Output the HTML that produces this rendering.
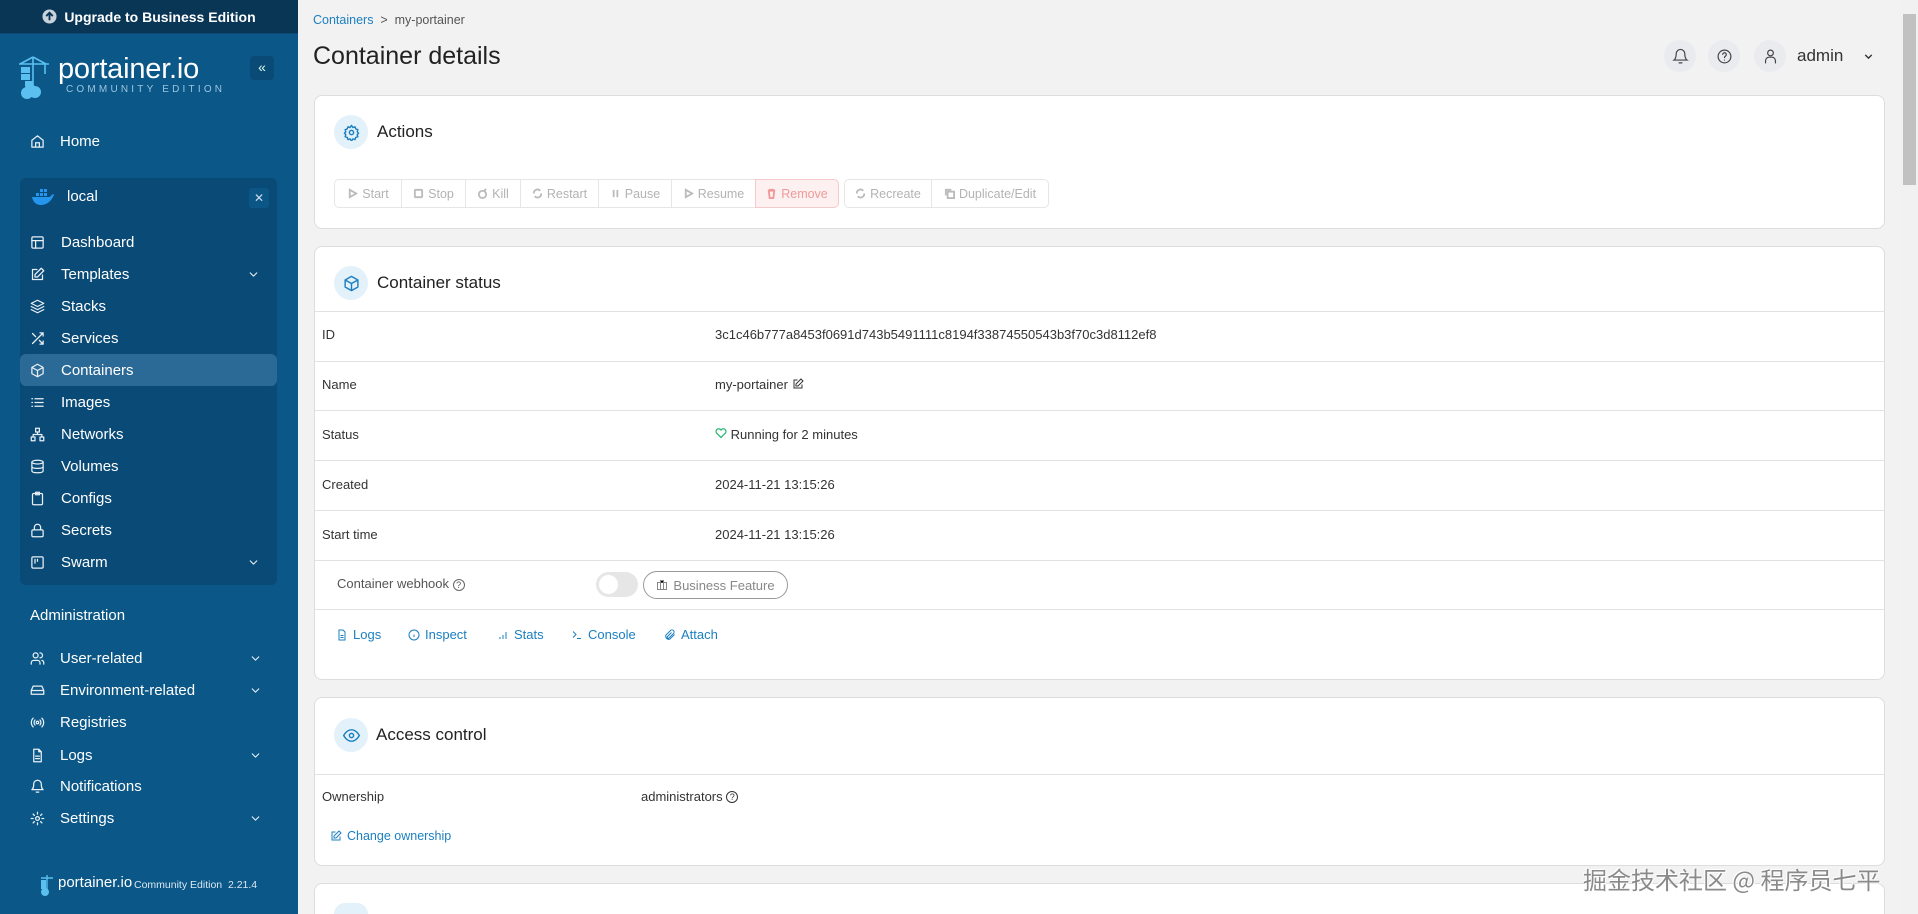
<!DOCTYPE html>
<html style="overflow:hidden;height:914px"><head><meta charset="utf-8"><style>
*{box-sizing:border-box;margin:0;padding:0}
body{width:1918px;height:914px;overflow:hidden;background:#f2f2f2;font-family:"Liberation Sans","Noto Sans CJK SC",sans-serif;position:relative;color:#222}
.abs{position:absolute}
#sb{position:absolute;left:0;top:0;width:298px;height:914px;background:#0b5787}
#up{position:absolute;left:0;top:0;width:298px;height:34px;background:#0a3656;color:#fff;font-size:14px;font-weight:bold;display:flex;align-items:center;justify-content:center;gap:7px;border-bottom:1px solid #0d4b75}
.nav{position:absolute;left:0;width:298px;height:20px;color:#fff;font-size:15px;font-weight:500;display:flex;align-items:center}
.nav svg{position:absolute;left:30px;width:15px;height:15px;fill:none;stroke:#e8f0f6;stroke-width:2;stroke-linecap:round;stroke-linejoin:round}
.nav span{position:absolute;left:60px}
.nav .chev{position:absolute;left:249px;width:13px;height:13px}
#env{position:absolute;left:20px;top:178px;width:257px;height:407px;background:#0a4a76;border-radius:6px}
.card{position:absolute;left:314px;width:1571px;background:#fff;border:1px solid #ddd;border-radius:8px}
.ic{position:absolute;width:34px;height:34px;border-radius:50%;background:#e3f1fb;display:flex;align-items:center;justify-content:center}
.ic svg{width:17px;height:17px;fill:none;stroke:#1b7fbf;stroke-width:2;stroke-linecap:round;stroke-linejoin:round}
.ct{position:absolute;font-size:17px;color:#222}
.hl{position:absolute;left:0;width:100%;height:1px;background:#e2e2e2}
.row{position:absolute;font-size:13px;color:#333}
.btn{position:absolute;top:179px;height:29px;border:1px solid #e6e6e6;font-size:12.5px;color:#b3b3b3;display:flex;align-items:center;justify-content:center;gap:4px;background:#fff}
.btn svg{width:11px;height:11px;fill:none;stroke:#bbb;stroke-width:2}
.lnk{position:absolute;top:627px;font-size:13px;color:#1b7fbf;display:flex;gap:5px;align-items:center}
.lnk svg{width:12px;height:12px;fill:none;stroke:#1b7fbf;stroke-width:2}
.hb{position:absolute;top:40px;width:32px;height:32px;border-radius:50%;background:#e9ebee;display:flex;align-items:center;justify-content:center}
.hb svg{width:17px;height:17px;fill:none;stroke:#444;stroke-width:1.7;stroke-linecap:round}
</style></head><body>
<div id="sb">
<div id="up"><svg width="15" height="15" viewBox="0 0 16 16"><circle cx="8" cy="8" r="7.5" fill="#c9d3dc"/><path d="M8 12V4M4.5 7.5 8 4l3.5 3.5" stroke="#0a3656" stroke-width="2" fill="none"/></svg>Upgrade to Business Edition</div>
<svg class="abs" style="left:17px;top:55px" width="34" height="46" viewBox="0 0 34 46"><g stroke="#5bc0f0" stroke-width="1.6" fill="none"><path d="M16 2v28M2 9h30M16 2 3 9M16 2l13 7M28 9v10"/></g><rect x="4" y="12" width="9" height="6" fill="#5bc0f0"/><rect x="4" y="19" width="9" height="6" fill="#5bc0f0"/><rect x="8" y="26" width="8" height="5" fill="#5bc0f0"/><circle cx="10" cy="38" r="6" fill="#5bc0f0"/><circle cx="18" cy="37" r="6" fill="#5bc0f0"/><circle cx="13" cy="33" r="5" fill="#5bc0f0"/></svg>
<div class="abs" style="left:58px;top:53px;color:#fff;font-size:29px;letter-spacing:-.2px">portainer.io</div>
<div class="abs" style="left:66px;top:84px;color:#9cc5e0;font-size:10px;letter-spacing:3.2px">COMMUNITY EDITION</div>
<div class="abs" style="left:250px;top:56px;width:24px;height:24px;background:#0a4a76;border-radius:4px;color:#dfe;font-size:14px;text-align:center;line-height:22px">«</div>
<div class="nav" style="top:131px"><svg viewBox="0 0 24 24"><path d="M3 10 12 3l9 7v11H3zM9 21v-7h6v7"/></svg><span>Home</span></div>
<div id="env"></div>
<svg class="abs" style="left:31px;top:188px" width="24" height="18" viewBox="0 0 24 18"><path d="M1 9h18c1-2 3-3 4-3-1 5-6 11-13 11C5 17 2 14 1 9z" fill="#2496ed"/><g fill="#2496ed"><rect x="5" y="5" width="3" height="3"/><rect x="9" y="5" width="3" height="3"/><rect x="13" y="5" width="3" height="3"/><rect x="9" y="1" width="3" height="3"/><rect x="13" y="1" width="3" height="3"/></g></svg>
<div class="abs" style="left:67px;top:188px;color:#fff;font-size:15px">local</div>
<div class="abs" style="left:249px;top:188px;width:20px;height:20px;background:#0c5686;border-radius:3px;color:#cde;font-size:12px;text-align:center;line-height:20px">✕</div>
<div class="abs" style="left:20px;top:354px;width:257px;height:32px;background:#2b6a96;border-radius:6px"></div>
<div class="nav" style="top:232px"><svg viewBox="0 0 24 24"><rect x="3" y="3" width="18" height="18" rx="2"/><path d="M3 9h18M9 9v12"/></svg><span style="left:61px">Dashboard</span></div>
<div class="nav" style="top:264px"><svg viewBox="0 0 24 24"><path d="M11 4H4v16h16v-7"/><path d="M18 2l4 4-10 10H8v-4z"/></svg><span style="left:61px">Templates</span><svg class="chev" viewBox="0 0 24 24" style="left:247px"><path d="M6 9l6 6 6-6"/></svg></div>
<div class="nav" style="top:296px"><svg viewBox="0 0 24 24"><path d="M12 2 2 7l10 5 10-5zM2 12l10 5 10-5M2 17l10 5 10-5"/></svg><span style="left:61px">Stacks</span></div>
<div class="nav" style="top:328px"><svg viewBox="0 0 24 24"><path d="M16 3h5v5M4 20 21 3M21 16v5h-5M15 15l6 6M4 4l5 5"/></svg><span style="left:61px">Services</span></div>
<div class="nav" style="top:360px"><svg viewBox="0 0 24 24"><path d="M12 2 3 7v10l9 5 9-5V7zM3 7l9 5 9-5M12 12v10"/></svg><span style="left:61px">Containers</span></div>
<div class="nav" style="top:392px"><svg viewBox="0 0 24 24"><path d="M8 6h13M8 12h13M8 18h13M3 6h1M3 12h1M3 18h1"/></svg><span style="left:61px">Images</span></div>
<div class="nav" style="top:424px"><svg viewBox="0 0 24 24"><rect x="9" y="2" width="6" height="6"/><rect x="2" y="16" width="6" height="6"/><rect x="16" y="16" width="6" height="6"/><path d="M5 16v-4h14v4M12 8v4"/></svg><span style="left:61px">Networks</span></div>
<div class="nav" style="top:456px"><svg viewBox="0 0 24 24"><ellipse cx="12" cy="5" rx="9" ry="3"/><path d="M3 5v14c0 2 4 3 9 3s9-1 9-3V5M3 12c0 2 4 3 9 3s9-1 9-3"/></svg><span style="left:61px">Volumes</span></div>
<div class="nav" style="top:488px"><svg viewBox="0 0 24 24"><rect x="4" y="4" width="16" height="18" rx="2"/><path d="M9 2h6v4H9z"/></svg><span style="left:61px">Configs</span></div>
<div class="nav" style="top:520px"><svg viewBox="0 0 24 24"><rect x="3" y="11" width="18" height="11" rx="2"/><path d="M7 11V7a5 5 0 0 1 10 0v4"/></svg><span style="left:61px">Secrets</span></div>
<div class="nav" style="top:552px"><svg viewBox="0 0 24 24"><rect x="3" y="3" width="18" height="18" rx="2"/><path d="M8 7v6M12 7v3"/></svg><span style="left:61px">Swarm</span><svg class="chev" viewBox="0 0 24 24" style="left:247px"><path d="M6 9l6 6 6-6"/></svg></div>
<div class="abs" style="left:30px;top:607px;color:#fff;font-size:15px;font-weight:500">Administration</div>
<div class="nav" style="top:648px"><svg viewBox="0 0 24 24"><circle cx="9" cy="7" r="4"/><path d="M2 21v-2a4 4 0 0 1 4-4h6a4 4 0 0 1 4 4v2M16 3a4 4 0 0 1 0 8M22 21v-2a4 4 0 0 0-3-4"/></svg><span>User-related</span><svg class="chev" viewBox="0 0 24 24"><path d="M6 9l6 6 6-6"/></svg></div>
<div class="nav" style="top:680px"><svg viewBox="0 0 24 24"><path d="M22 12H2M5 5h14l3 7v6H2v-6z"/></svg><span>Environment-related</span><svg class="chev" viewBox="0 0 24 24"><path d="M6 9l6 6 6-6"/></svg></div>
<div class="nav" style="top:712px"><svg viewBox="0 0 24 24"><circle cx="12" cy="12" r="2"/><path d="M16 8a6 6 0 0 1 0 8M8 16a6 6 0 0 1 0-8M19 5a10 10 0 0 1 0 14M5 19A10 10 0 0 1 5 5"/></svg><span>Registries</span></div>
<div class="nav" style="top:745px"><svg viewBox="0 0 24 24"><path d="M14 2H6v20h12V6zM14 2v4h4M9 13h6M9 17h6"/></svg><span>Logs</span><svg class="chev" viewBox="0 0 24 24"><path d="M6 9l6 6 6-6"/></svg></div>
<div class="nav" style="top:776px"><svg viewBox="0 0 24 24"><path d="M18 8A6 6 0 0 0 6 8c0 7-3 9-3 9h18s-3-2-3-9M10 21h4"/></svg><span>Notifications</span></div>
<div class="nav" style="top:808px"><svg viewBox="0 0 24 24"><circle cx="12" cy="12" r="3"/><path d="M12 2v3M12 19v3M2 12h3M19 12h3M5 5l2 2M17 17l2 2M5 19l2-2M17 7l2-2"/></svg><span>Settings</span><svg class="chev" viewBox="0 0 24 24"><path d="M6 9l6 6 6-6"/></svg></div>
<svg class="abs" style="left:40px;top:874px" width="14" height="22" viewBox="0 0 14 22"><path d="M7 1v20M1 4h12" stroke="#5bc0f0" stroke-width="1.4"/><rect x="1" y="6" width="5" height="9" fill="#5bc0f0"/><circle cx="5" cy="18" r="4" fill="#5bc0f0"/></svg>
<div class="abs" style="left:58px;top:874px;color:#fff;font-size:15px">portainer.io</div>
<div class="abs" style="left:134px;top:879px;color:#dbe8f2;font-size:10.5px">Community Edition&nbsp; 2.21.4</div>
</div>

<div class="abs" style="left:313px;top:13px;font-size:12.5px;color:#555"><span style="color:#1b7fbf">Containers</span>&nbsp;&nbsp;&gt;&nbsp;&nbsp;my-portainer</div>
<div class="abs" style="left:313px;top:42px;font-size:25px;color:#222">Container details</div>
<div class="hb" style="left:1664px"><svg viewBox="0 0 24 24"><path d="M18 8A6 6 0 0 0 6 8c0 7-3 9-3 9h18s-3-2-3-9M10 21h4"/></svg></div>
<div class="hb" style="left:1708px"><svg viewBox="0 0 24 24"><circle cx="12" cy="12" r="9"/><path d="M9.5 9a2.5 2.5 0 0 1 5 .5c0 2-2.5 2-2.5 4M12 17h0"/></svg></div>
<div class="hb" style="left:1754px"><svg viewBox="0 0 24 24"><circle cx="12" cy="7" r="4"/><path d="M5 21v-3a5 5 0 0 1 5-5h4a5 5 0 0 1 5 5v3"/></svg></div>
<div class="abs" style="left:1797px;top:46px;font-size:17px;color:#333">admin</div>
<svg class="abs" style="left:1862px;top:50px" width="13" height="13" viewBox="0 0 24 24"><path d="M6 9l6 6 6-6" stroke="#333" stroke-width="2.5" fill="none"/></svg>

<div class="card" style="top:95px;height:134px"></div>
<div class="ic" style="left:334px;top:115px"><svg viewBox="0 0 24 24"><circle cx="12" cy="12" r="3"/><path d="M12 2l2 3 3-1 1 3 3 1-1 3 2 2-2 2 1 3-3 1-1 3-3-1-2 3-2-3-3 1-1-3-3-1 1-3-2-2 2-2-1-3 3-1 1-3 3 1z"/></svg></div>
<div class="ct" style="left:377px;top:122px">Actions</div>
<div class="btn" style="left:334px;width:68px;border-radius:5px 0 0 5px"><svg viewBox="0 0 12 12"><path d="M3 2l7 4-7 4z"/></svg>Start</div>
<div class="btn" style="left:401px;width:65px"><svg viewBox="0 0 12 12"><rect x="2" y="2" width="8" height="8" rx="1"/></svg>Stop</div>
<div class="btn" style="left:465px;width:56px"><svg viewBox="0 0 12 12"><circle cx="6" cy="7" r="4"/><path d="M8 3l2-2"/></svg>Kill</div>
<div class="btn" style="left:520px;width:79px"><svg viewBox="0 0 12 12"><path d="M2 6a4 4 0 0 1 7-3M10 6a4 4 0 0 1-7 3"/></svg>Restart</div>
<div class="btn" style="left:598px;width:74px"><svg viewBox="0 0 12 12"><path d="M4 2v8M8 2v8"/></svg>Pause</div>
<div class="btn" style="left:671px;width:85px"><svg viewBox="0 0 12 12"><path d="M3 2l7 4-7 4z"/></svg>Resume</div>
<div class="btn" style="left:755px;width:84px;background:#fdf0f0;border-color:#f5caca;color:#ef9a9a;border-radius:0 5px 5px 0"><svg viewBox="0 0 12 12" style="stroke:#ef9a9a"><path d="M2 3h8M4 3V2h4v1M3 3l1 8h4l1-8"/></svg>Remove</div>
<div class="btn" style="left:844px;width:88px;border-radius:5px 0 0 5px"><svg viewBox="0 0 12 12"><path d="M2 6a4 4 0 0 1 7-3M10 6a4 4 0 0 1-7 3"/></svg>Recreate</div>
<div class="btn" style="left:931px;width:118px;border-radius:0 5px 5px 0"><svg viewBox="0 0 12 12"><rect x="4" y="4" width="7" height="7"/><path d="M2 8V2h6"/></svg>Duplicate/Edit</div>

<div class="card" style="top:246px;height:434px">
<div class="hl" style="top:64px"></div><div class="hl" style="top:114px"></div><div class="hl" style="top:163px"></div><div class="hl" style="top:213px"></div><div class="hl" style="top:263px"></div><div class="hl" style="top:313px"></div><div class="hl" style="top:362px"></div>
</div>
<div class="ic" style="left:334px;top:266px"><svg viewBox="0 0 24 24"><path d="M12 2 3 7v10l9 5 9-5V7zM3 7l9 5 9-5M12 12v10"/></svg></div>
<div class="ct" style="left:377px;top:273px">Container status</div>
<div class="row" style="left:322px;top:327px">ID</div><div class="row" style="left:715px;top:327px">3c1c46b777a8453f0691d743b5491111c8194f33874550543b3f70c3d8112ef8</div>
<div class="row" style="left:322px;top:377px">Name</div><div class="row" style="left:715px;top:377px">my-portainer <svg width="12" height="12" viewBox="0 0 24 24" style="vertical-align:-1px"><path d="M11 4H4v16h16v-7M18 2l4 4-10 10H8v-4z" stroke="#333" stroke-width="2" fill="none"/></svg></div>
<div class="row" style="left:322px;top:427px">Status</div><div class="row" style="left:715px;top:427px"><svg width="12" height="12" viewBox="0 0 24 24" style="vertical-align:0"><path d="M12 21 3 12a5 5 0 0 1 9-6 5 5 0 0 1 9 6z" stroke="#2bb673" stroke-width="2.5" fill="none"/></svg> Running for 2 minutes</div>
<div class="row" style="left:322px;top:477px">Created</div><div class="row" style="left:715px;top:477px">2024-11-21 13:15:26</div>
<div class="row" style="left:322px;top:527px">Start time</div><div class="row" style="left:715px;top:527px">2024-11-21 13:15:26</div>
<div class="row" style="left:337px;top:576px;color:#555">Container webhook <span style="display:inline-block;width:12px;height:12px;border:1px solid #666;border-radius:50%;font-size:9px;text-align:center;line-height:11px">?</span></div>
<div class="abs" style="left:596px;top:572px;width:42px;height:25px;border-radius:13px;background:#e6e6e6"><div style="position:absolute;left:3px;top:3px;width:19px;height:19px;border-radius:50%;background:#fff"></div></div>
<div class="abs" style="left:643px;top:571px;width:145px;height:28px;border:1px solid #999;border-radius:14px;font-size:13px;color:#888;display:flex;align-items:center;justify-content:center;gap:5px"><svg width="12" height="12" viewBox="0 0 24 24"><rect x="3" y="7" width="18" height="14" stroke="#888" stroke-width="2" fill="none"/><path d="M9 7V3h6v4M9 7v14M15 7v14" stroke="#888" stroke-width="2"/></svg>Business Feature</div>
<div class="lnk" style="left:336px"><svg viewBox="0 0 24 24"><path d="M14 2H6v20h12V6zM9 13h6M9 17h6"/></svg>Logs</div>
<div class="lnk" style="left:408px"><svg viewBox="0 0 24 24"><circle cx="12" cy="12" r="10"/><path d="M12 16v-5M12 8h0"/></svg>Inspect</div>
<div class="lnk" style="left:497px"><svg viewBox="0 0 24 24"><path d="M6 20v-4M12 20v-8M18 20V6"/></svg>Stats</div>
<div class="lnk" style="left:571px"><svg viewBox="0 0 24 24"><path d="M4 17l6-6-6-6M12 19h8"/></svg>Console</div>
<div class="lnk" style="left:664px"><svg viewBox="0 0 24 24"><path d="M21 11l-9 9a6 6 0 0 1-8-8l9-9a4 4 0 0 1 6 6l-9 9a2 2 0 0 1-3-3l8-8"/></svg>Attach</div>

<div class="card" style="top:697px;height:169px"><div class="hl" style="top:76px"></div></div>
<div class="ic" style="left:334px;top:718px"><svg viewBox="0 0 24 24"><path d="M1 12s4-8 11-8 11 8 11 8-4 8-11 8S1 12 1 12z"/><circle cx="12" cy="12" r="3"/></svg></div>
<div class="ct" style="left:376px;top:725px">Access control</div>
<div class="row" style="left:322px;top:789px">Ownership</div>
<div class="row" style="left:641px;top:789px">administrators <span style="display:inline-block;width:12px;height:12px;border:1px solid #333;border-radius:50%;font-size:9px;text-align:center;line-height:11px;vertical-align:1px">?</span></div>
<div class="lnk" style="left:330px;top:829px;font-size:12.5px"><svg viewBox="0 0 24 24"><path d="M11 4H4v16h16v-7M18 2l4 4-10 10H8v-4z"/></svg>Change ownership</div>

<div class="card" style="top:883px;height:31px;border-bottom:none;border-radius:8px 8px 0 0"></div>
<div class="abs" style="left:334px;top:903px;width:34px;height:11px;border-radius:17px 17px 0 0;background:#e3f1fb"></div>

<div class="abs" style="left:1900px;top:0;width:18px;height:914px;background:#f1f1f1"></div>
<div class="abs" style="left:1903px;top:14px;width:13px;height:171px;background:#c1c1c1"></div>
<div class="abs" style="left:1583px;top:861px;font-size:24px;color:#8a8a8a;text-shadow:1px 1px 0 #fff,-1px -1px 0 #fff;font-family:'Noto Sans CJK SC',sans-serif">掘金技术社区 @ 程序员七平</div>
</body></html>
